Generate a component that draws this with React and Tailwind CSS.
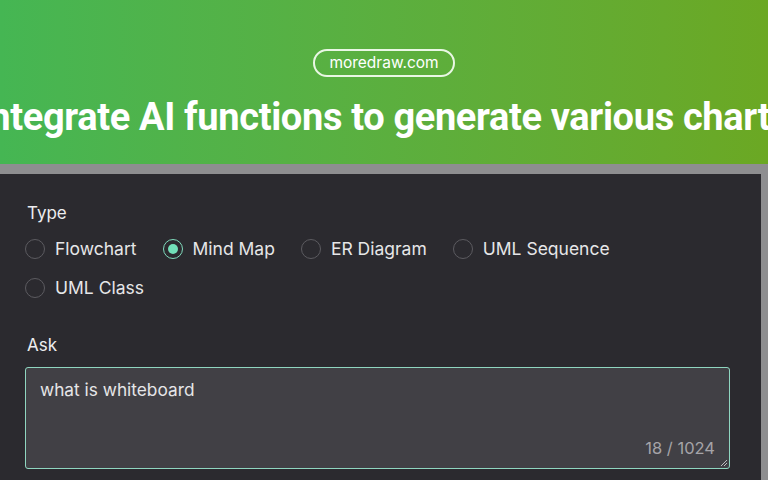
import { useState } from 'react'

const TYPES = [
  ['flowchart', 'Flowchart'],
  ['mindmap', 'Mind Map'],
  ['er', 'ER Diagram'],
  ['sequence', 'UML Sequence'],
  ['class', 'UML Class'],
]

function Radio({ checked, label, onClick }) {
  return (
    <button type="button" onClick={onClick} className="flex items-center gap-[10px] h-[24px]">
      <span
        className={`flex items-center justify-center w-[20px] h-[20px] rounded-full border-[1.5px] ${
          checked ? 'border-[#7fd9bb]' : 'border-[#5c5b60]'
        }`}
      >
        {checked && <span className="w-[10px] h-[10px] rounded-full bg-[#72e0b9]" />}
      </span>
      <span className="text-[17.5px] text-[#e6e6e8]">{label}</span>
    </button>
  )
}

export default function App() {
  const [type, setType] = useState('mindmap')
  const [ask, setAsk] = useState('what is whiteboard')

  return (
    <div className="h-[480px] w-[768px] overflow-hidden bg-[#8e8e90] font-['Inter',sans-serif]">
      {/* Hero */}
      <div className="h-[164px] bg-gradient-to-r from-[#45b653] to-[#6ba823] flex flex-col items-center pt-[49px] overflow-hidden">
        <div className="px-[14px] h-[28px] flex items-center rounded-full border-2 border-[#e9f7e4] text-[15.5px] text-white">
          moredraw.com
        </div>
        <h1 className="mt-[17px] whitespace-nowrap font-['Roboto',sans-serif] text-[38px] font-bold tracking-[-0.35px] text-white leading-[46px]">
          Integrate AI functions to generate various charts
        </h1>
      </div>

      {/* Dialog */}
      <div className="pt-[10px] flex">
        <div className="w-[761px] h-[306px] bg-[#2b2a2f] px-[25px] pt-[29px]">
          <div className="text-[17px] text-[#ededef] leading-[20px] px-[2px]">Type</div>
          <div className="mt-[14px] flex flex-wrap gap-x-[26px] gap-y-[15px] w-[640px]">
            {TYPES.map(([key, label]) => (
              <Radio key={key} label={label} checked={type === key} onClick={() => setType(key)} />
            ))}
          </div>

          <div className="mt-[35px] text-[17px] text-[#ededef] leading-[20px] px-[2px]">Ask</div>
          <div className="relative mt-[12px] w-[705px] h-[102px] rounded-[3px] border-[1.5px] border-[#8fd6c0] bg-[#414045]">
            <textarea
              value={ask}
              onChange={(e) => setAsk(e.target.value)}
              className="w-full h-full bg-transparent resize-none outline-none px-[14px] pt-[9px] text-[17.3px] text-[#e6e6e8]"
            />
            <span className="absolute right-[14px] bottom-[7px] text-[16.5px] text-[#a5a4a8]">
              {ask.length} / 1024
            </span>
            <svg className="absolute right-[1px] bottom-[1px]" width="8" height="8" viewBox="0 0 8 8">
              <path d="M7 1 L1 7 M7 4 L4 7" stroke="#bdbdc0" strokeWidth="1" />
            </svg>
          </div>
        </div>
      </div>
    </div>
  )
}
